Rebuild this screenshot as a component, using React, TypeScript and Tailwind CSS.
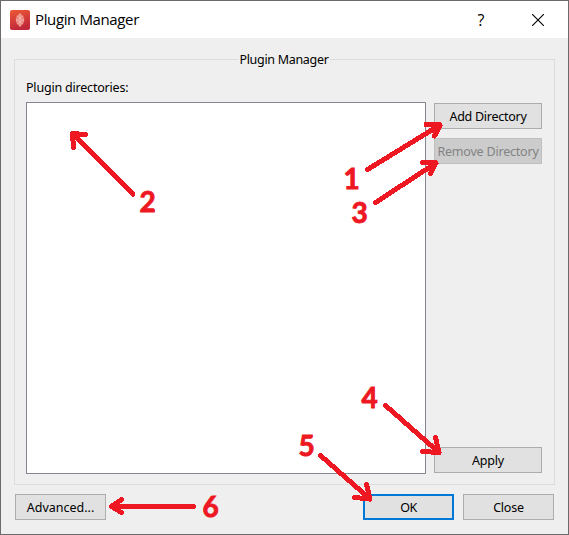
import type { ReactNode } from "react";

const uiFont = "font-['Noto_Sans','Open_Sans',sans-serif]";

const tones = {
  normal: "border border-[#adadad] bg-[#e1e1e1] text-black",
  disabled: "border border-[#bfbfbf] bg-[#cccccc] text-[#838383]",
  primary: "border-2 border-[#0078d7] bg-[#e1e1e1] text-black",
};

function Button({
  children,
  tone = "normal",
  className = "",
}: {
  children: ReactNode;
  tone?: keyof typeof tones;
  className?: string;
}) {
  return (
    <button
      disabled={tone === "disabled"}
      className={`flex h-[26px] shrink-0 items-center justify-center pt-[3px] text-[12.5px] leading-none whitespace-nowrap ${tones[tone]} ${className}`}
    >
      {children}
    </button>
  );
}

function AppIcon() {
  return (
    <svg width="20" height="20" viewBox="0 0 20 20">
      <defs>
        <linearGradient id="appIcon" x1="0" y1="0" x2="0.3" y2="1">
          <stop offset="0" stopColor="#ee5a35" />
          <stop offset="1" stopColor="#c0273a" />
        </linearGradient>
      </defs>
      <rect width="20" height="20" rx="2" fill="url(#appIcon)" />
      <path d="M10 3L13 5.500Q15.500 10 13 14L10 17L7 14Q4.500 10 7 5.500Z" fill="#f0978c" fillOpacity="0.75" />
      <path
        d="M10 3.500V16.500M7 6L10 8L13 6M6 9L10 12L14 9M6 11.500L10 8L14 11.500M7 14L10 12L13 14"
        fill="none"
        stroke="#fac4bb"
        strokeWidth="0.7"
      />
    </svg>
  );
}

function Annotations() {
  return (
    <svg className="pointer-events-none absolute -top-px -left-px" width="569" height="535" viewBox="0 0 569 535">
      <g
        fill="none"
        stroke="#ed1822"
        strokeWidth="5"
        strokeLinecap="round"
        strokeLinejoin="round"
        shapeRendering="crispEdges"
      >
        <path d="M367.500 169.500L440 125M426 124.500L440 125L434.500 136" />
        <path d="M133 194L72.500 133.500M85.500 134.500L72.500 133.500L73.500 147.500" />
        <path d="M375.500 202.500L436 163M422.500 162.500L436 163L430.500 173.500" />
        <path d="M385.500 405.500L439 452.500M422.500 451.500L439 452.500L435.500 437.500" />
        <path d="M320.500 455.500L370 499M354.500 497.500L370 499L366.500 484.500" />
        <path d="M193.500 506.500H111.500M121.500 499.500L111.500 506.500L121.500 512.500" />
      </g>
      <g
        className="font-['Lato','Open_Sans',sans-serif] text-[28px] font-bold"
        fill="#ed1822"
        stroke="#ed1822"
        strokeWidth="0.9"
        textAnchor="middle"
      >
        <text x="351.500" y="189">1</text>
        <text x="147.500" y="212">2</text>
        <text x="359.500" y="223">3</text>
        <text x="369.500" y="408">4</text>
        <text x="306.500" y="456">5</text>
        <text x="210.500" y="517">6</text>
      </g>
    </svg>
  );
}

export default function App() {
  return (
    <div className={`relative flex h-[535px] w-[569px] flex-col border border-[#6b6b6b] bg-[#efefef] text-black ${uiFont}`}>
      <header className="flex h-[37px] shrink-0 items-center bg-white pl-[9px]">
        <AppIcon />
        <h1 className="ml-[5px] text-[15px] leading-none tracking-[-0.37px] font-['Open_Sans','Noto_Sans',sans-serif]">
          Plugin Manager
        </h1>
        <span className="ml-auto w-[10px] text-center text-[16px] leading-none font-['Open_Sans','Noto_Sans',sans-serif]">?</span>
        <svg className="mr-[24px] ml-[46px]" width="12" height="12" viewBox="0 0 12 12">
          <path d="M0 0L12 12M12 0L0 12" stroke="#000" strokeWidth="1.100" />
        </svg>
      </header>

      <main className="flex grow flex-col px-[13px] pt-[14px]">
        <fieldset className="flex h-[433px] min-w-0 flex-col border border-[#dcdcdc] pr-[12px] pl-[11px]">
          <legend className="mx-auto h-[15px] w-[92px] text-center text-[12.5px] leading-[16px] tracking-[-0.3px] whitespace-nowrap">
            Plugin Manager
          </legend>
          <label className="mt-[12px] text-[12.5px] leading-[18px] tracking-[-0.2px]">Plugin directories:</label>
          <div className="mt-[5px] flex h-[372px] gap-[8px]">
            <div className="w-[400px] border border-[#828790] bg-white" />
            <div className="flex w-[108px] flex-col pt-px pb-px">
              <Button className="tracking-[-0.27px]">Add Directory</Button>
              <Button tone="disabled" className="mt-[9px] tracking-[-0.2px]">
                Remove Directory
              </Button>
              <Button className="mt-auto tracking-[-0.2px]">Apply</Button>
            </div>
          </div>
        </fieldset>
        <footer className="mt-[9px] flex px-px">
          <Button className="w-[91px]">Advanced...</Button>
          <Button tone="primary" className="ml-auto w-[91px] tracking-[-0.5px]">
            OK
          </Button>
          <Button className="ml-[9px] w-[91px] tracking-[-0.2px]">Close</Button>
        </footer>
      </main>
      <Annotations />
    </div>
  );
}
